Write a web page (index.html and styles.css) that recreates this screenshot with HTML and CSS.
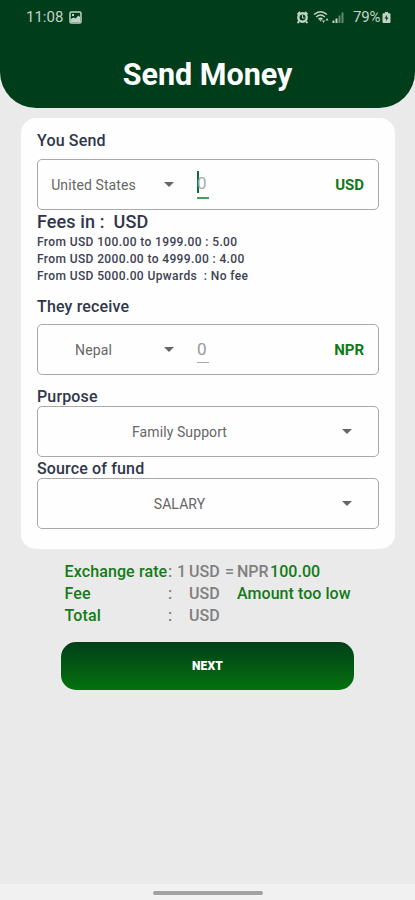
FILE: index.html
```html
<!DOCTYPE html>
<html lang="en">
<head>
<meta charset="utf-8">
<title>Send Money</title>
<link rel="stylesheet" href="styles.css">
</head>
<body>
<main class="screen">
  <header class="header">
    <div class="status">
      <span class="clock">11:08</span>
      <svg class="photo" width="13" height="13" viewBox="0 0 13 13"><rect x="1" y="1" width="11" height="11" rx="1.5" fill="none" stroke="currentColor" stroke-width="1.5"/><path d="M2 10V8l2.500-1.500 2 1L9.500 4.500 11 6V11H2zM3 3h2v2H3z" fill="currentColor"/></svg>
      <span class="spacer"></span>
      <svg class="alarm" width="13" height="13" viewBox="0 0 12 13"><path d="M1 3.500L3.500 1M11 3.500L8.500 1M2.500 10.500L1 12M9.500 10.500l1.500 1.500" stroke="currentColor" stroke-width="1.800"/><circle cx="6" cy="6.500" r="4.200" fill="none" stroke="currentColor" stroke-width="2.400"/><path d="M6 4v3h2" fill="none" stroke="currentColor"/></svg>
      <svg class="wifi" width="17" height="14" viewBox="0 0 17 14"><path d="M1 4.500Q7.500-1 14 4.500M3.200 7Q7.500 3 11.800 7M5.500 9.200Q7.500 7.500 9.500 9.200" fill="none" stroke="currentColor" stroke-width="1.500"/><path d="M6 9.500h3L7.500 11.500zM9 10.500l1.500 2.500L12 10.500zM12.500 10.500l1.500-2.500L15.500 10.500z" fill="currentColor"/></svg>
      <svg class="signal" width="12" height="13" viewBox="0 0 12 13"><path d="M.5 9.500h2V12h-2zM3.500 7.500h2V12h-2z" fill="currentColor"/><path d="M6.500 4.500h2V12h-2zM9.500 1.500h2V12h-2z" fill="currentColor" opacity=".5"/></svg>
      <span class="percent">79%</span>
      <svg class="battery" width="9" height="13" viewBox="0 0 9 13"><path d="M3 1h3v1.200h1.500q1 0 1 1V11q0 1-1 1h-6q-1 0-1-1V3.200q0-1 1-1H3z" fill="currentColor"/><path d="M5.200 3.500L2.500 7.500h1.800L3.800 10.500 6.500 6.500H4.700z" fill="#003d1b"/></svg>
    </div>
    <h1 class="title">Send Money</h1>
  </header>

  <section class="card">
    <h2 class="label label-send">You Send</h2>
    <div class="box">
      <span class="country">United States</span>
      <svg class="arrow" width="10" height="5" viewBox="0 0 10 5"><path d="M0 0h10L5 5z"/></svg>
      <span class="amount active">0</span>
      <span class="currency">USD</span>
    </div>
    <h2 class="fees-title">Fees in :&nbsp; USD</h2>
    <ul class="fees">
      <li>From USD 100.00 to 1999.00 : 5.00</li>
      <li>From USD 2000.00 to 4999.00 : 4.00</li>
      <li>From USD 5000.00 Upwards&nbsp; : No fee</li>
    </ul>
    <h2 class="label label-receive">They receive</h2>
    <div class="box">
      <span class="country">Nepal</span>
      <svg class="arrow" width="10" height="5" viewBox="0 0 10 5"><path d="M0 0h10L5 5z"/></svg>
      <span class="amount">0</span>
      <span class="currency">NPR</span>
    </div>
    <h2 class="label label-purpose">Purpose</h2>
    <div class="box">
      <span class="choice">Family Support</span>
      <svg class="arrow" width="10" height="5" viewBox="0 0 10 5"><path d="M0 0h10L5 5z"/></svg>
    </div>
    <h2 class="label label-source">Source of fund</h2>
    <div class="box">
      <span class="choice">SALARY</span>
      <svg class="arrow" width="10" height="5" viewBox="0 0 10 5"><path d="M0 0h10L5 5z"/></svg>
    </div>
  </section>

  <section class="summary">
    <div class="row"><span class="name">Exchange rate</span><span class="colon">:</span><span class="one">1</span><span class="unit">USD</span><span class="equals">=</span><span class="npr">NPR</span><span class="green">100.00</span></div>
    <div class="row"><span class="name">Fee</span><span class="colon">:</span><span class="one"></span><span class="unit">USD</span><span class="equals"></span><span class="green">Amount too low</span></div>
    <div class="row"><span class="name">Total</span><span class="colon">:</span><span class="one"></span><span class="unit">USD</span></div>
  </section>
  <button class="next" type="button">NEXT</button>
  <footer class="navbar"><span class="handle"></span></footer>
</main>
</body>
</html>
```
FILE: styles.css
```css
* { box-sizing: border-box; }
body { margin: 0; font-family: Roboto, "Liberation Sans", sans-serif; background: #eaeaea; }
h1, h2, ul { margin: 0; padding: 0; }
.screen { display: flex; flex-direction: column; height: 900px; background: #eaeaea; overflow: hidden; }
.header { height: 108px; flex: none; background: #003d1b; border-radius: 0 0 36px 36px; color: #fff; }
.status { display: flex; align-items: center; height: 34px; padding: 0 24px 0 26px; color: #c3d3c6; }
.clock { width: 38px; font-size: 15px; }
.photo { margin-left: 5px; }
.spacer { flex: 1; }
.wifi { margin-left: 4px; }
.signal { margin-left: 2px; }
.percent { width: 29px; margin-left: 9px; font-size: 15px; letter-spacing: -.2px; }
.title { margin-top: 23px; font-size: 30.5px; line-height: 36px; font-weight: 700; text-align: center; }
.card { width: 374px; height: 431px; flex: none; margin: 10px 0 0 21px; padding: 12px 16px 0; border-radius: 15px; background: #fefefe; }
.label { font-size: 16px; font-weight: 500; line-height: 20px; letter-spacing: .15px; color: #30364a; }
.label-send { height: 29px; padding-top: 1px; }
.label-receive { height: 39px; padding-top: 12px; }
.label-purpose { height: 31px; padding-top: 12px; }
.label-source { height: 21px; padding-top: 2px; }
.box { display: flex; align-items: center; height: 51px; width: 342px; border: 1px solid #a9a9a9; border-radius: 5px; font-size: 14px; letter-spacing: .1px; color: #666; }
.country { width: 111px; text-align: center; }
.arrow { fill: #666; margin-left: 15px; }
.amount { margin-left: 23px; width: 12px; height: 26px; line-height: 25px; font-size: 17px; color: #999; border-bottom: 1px solid #aaa; }
.active { color: #aaa; height: 28px; border-bottom: 2px solid #4a9b60; background: linear-gradient(#087034, #087034) 0 0 / 2px 22px no-repeat; }
.currency { margin-left: auto; margin-right: 14px; font-size: 15px; font-weight: 700; letter-spacing: 0; color: #117817; }
.choice { width: 283px; text-align: center; }
.choice + .arrow { margin-left: 21px; }
.fees-title { height: 24px; line-height: 24px; font-size: 18px; font-weight: 500; letter-spacing: .1px; color: #30364a; }
.fees { list-style: none; font-size: 12px; line-height: 17px; font-weight: 500; letter-spacing: .38px; color: #3d4252; }
.summary { padding: 12px 0 0 64.5px; font-size: 16px; line-height: 22px; font-weight: 500; color: #808080; }
.row { display: flex; height: 22px; white-space: nowrap; }
.name { width: 103.5px; letter-spacing: .12px; color: #127b18; }
.colon { width: 9px; }
.one { width: 12px; }
.unit { width: 36px; }
.equals { width: 12px; }
.npr { width: 33px; }
.green { letter-spacing: .05px; color: #127b18; }
.next { width: 293px; height: 48px; flex: none; margin: 15px 0 0 61px; padding: 0; border: 0; border-radius: 15px; background: linear-gradient(#003f1a, #04720c); color: #fff; font: 900 12px Roboto, sans-serif; letter-spacing: .2px; }
.navbar { display: flex; justify-content: center; height: 16px; margin-top: auto; padding-top: 7px; background: #f1f1f1; }
.handle { width: 110px; height: 4px; border-radius: 2px; background: #a2a2a2; }
```
